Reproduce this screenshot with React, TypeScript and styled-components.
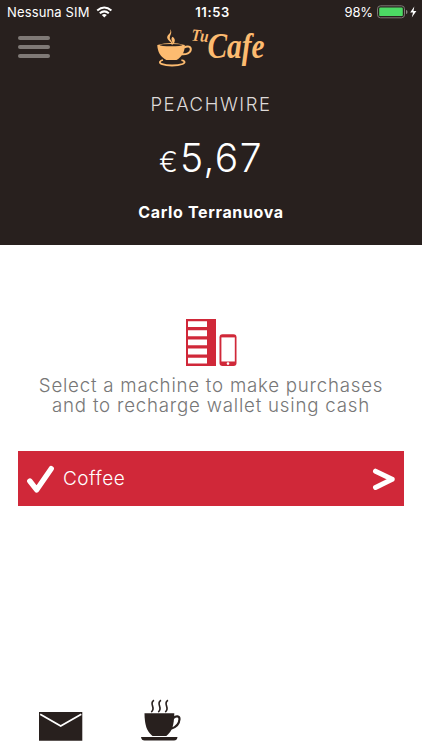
import React from "react";
import styled, { createGlobalStyle } from "styled-components";

const GlobalStyle = createGlobalStyle`
  * { box-sizing: border-box; }
  body { margin: 0; background: #fff; font-family: Inter, "Open Sans", sans-serif; }
  svg { display: block; flex: none; }
`;

const Screen = styled.div`
  width: 422px;
  height: 750px;
  display: flex;
  flex-direction: column;
  background: #fff;
  overflow: hidden;
`;

const Header = styled.header`
  height: 245px;
  flex: none;
  background: #28201e;
  color: #fff;
`;

const StatusBar = styled.div`
  height: 24px;
  display: grid;
  grid-template-columns: 1fr auto 1fr;
  align-items: center;
  padding: 0 4px 0 7px;
`;

const StatusGroup = styled.div<{ $end?: boolean }>`
  display: flex;
  align-items: center;
  justify-content: ${(p) => (p.$end ? "flex-end" : "flex-start")};
`;

const StatusText = styled.span<{ $bold?: boolean; $spacing: number }>`
  font-size: 13px;
  line-height: 24px;
  font-weight: ${(p) => (p.$bold ? 600 : 400)};
  letter-spacing: ${(p) => p.$spacing}px;
  white-space: nowrap;
`;

const WifiSlot = styled.div`
  margin-left: 6px;
`;

const NavBar = styled.div`
  height: 50px;
  display: grid;
  grid-template-columns: 133px 1fr;
  padding-left: 18px;
`;

const MenuButton = styled.button`
  display: flex;
  flex-direction: column;
  gap: 5px;
  width: 32px;
  height: 24px;
  margin: 12px 0 0;
  padding: 0;
  border: 0;
  background: none;
`;

const MenuLine = styled.span`
  height: 4px;
  border-radius: 2px;
  background: #7f7976;
`;

const Line = styled.div<{ $size: number; $height: number; $weight?: number; $spacing?: number }>`
  font-size: ${(p) => p.$size}px;
  line-height: ${(p) => p.$height}px;
  font-weight: ${(p) => p.$weight ?? 300};
  letter-spacing: ${(p) => p.$spacing ?? 0}px;
  text-align: center;
  white-space: nowrap;
`;

const Brand = styled(Line)`
  margin-top: 18px;
  color: #dedad8;
`;

const Balance = styled(Line)`
  margin-top: 22px;
`;

const Currency = styled.span`
  font-size: 28px;
  letter-spacing: 2px;
`;

const Owner = styled(Line)`
  margin-top: 20px;
`;

const Main = styled.main`
  flex: 1;
  display: flex;
  flex-direction: column;
  align-items: center;
  padding-top: 73px;
`;

const Prompt = styled.div`
  margin-top: 10px;
  color: #777;
`;

const MachineRow = styled.button`
  width: 386px;
  height: 55px;
  margin-top: 36px;
  padding: 0 8px;
  display: flex;
  align-items: center;
  border: 0;
  background: #d02839;
  color: #fff;
  font-family: inherit;
`;

const MachineName = styled(Line)`
  margin: 0 auto 0 9px;
`;

const Footer = styled.footer`
  height: 51px;
  display: flex;
  align-items: flex-start;
  padding-left: 39px;
  gap: 57px;
`;

const MailSlot = styled.div`
  padding-top: 13px;
`;

const WifiIcon = () => (
  <svg width="17" height="12" viewBox="0 0 17 12">
    <g fill="none" stroke="#fff" strokeWidth="2">
      <path d="M1.2 4.6Q8.3-1.6 15.4 4.6" />
      <path d="M3.8 7.3Q8.3 3.4 12.8 7.3" />
    </g>
    <path d="M5.8 9Q8.3 7 10.8 9L8.3 11.5Z" fill="#fff" />
  </svg>
);

const BatteryIcon = () => (
  <svg width="45" height="14" viewBox="-3 0 45 14">
    <rect x="1.5" y=".8" width="27" height="12" rx="3" fill="none" stroke="#7b7773" />
    <rect x="3.2" y="2.5" width="23.6" height="8.6" rx="1.2" fill="#4cd964" />
    <path d="M30 5Q31.5 5 31.5 7T30 9Z" fill="#8b8784" />
    <path d="M38.3 1.5 34.2 7.6H37L35.8 12.5 40.4 5.9H37.5Z" fill="#fff" />
  </svg>
);

const Logo = () => (
  <svg width="128" height="50" viewBox="151 24 128 50" fill="#fdbb70">
    <path d="M157.3 45Q171 40.8 184.8 45C185 52 181.2 57.4 176.5 60H166.3C160.5 57 157.5 51.8 157.3 45Z" />
    <ellipse cx="171" cy="45.1" rx="11.4" ry="1.2" fill="#28201e" />
    <path d="M184 47.6C188 45.2 191 46.8 190.8 49.5 190.6 53 186.2 54.6 181.6 54.2" fill="none" stroke="#fdbb70" strokeWidth="2" />
    <path d="M163 60C159 61 159 63 162.2 64.1 167 66 177 66 182.6 64 185.7 62.5 185 60.7 181.4 60.2" fill="none" stroke="#fdbb70" strokeWidth="1.8" />
    <path d="M170 29.2C172.3 34.1 165.7 34.3 167.5 38.8 168.5 41.3 172 42 171.7 45 174.2 41.6 169.1 40.2 169.8 36.9 170.4 34.7 172.7 32 170 29.2Z" />
    <path d="M172.5 36.8C175.7 38.7 175.6 42.5 172.2 45.2 173.6 41 169.7 39.7 172.5 36.8Z" />
    <text x="191" y="40.4" transform="rotate(5 191 41)" fontFamily="Liberation Serif, serif" fontSize="17" fontWeight="700" fontStyle="italic" textLength="17" lengthAdjust="spacingAndGlyphs">Tu</text>
    <text x="207.5" y="58.4" fontFamily="Liberation Serif, serif" fontSize="35" fontWeight="700" fontStyle="italic" textLength="57" lengthAdjust="spacingAndGlyphs">Cafe</text>
  </svg>
);

const MachineIcon = () => (
  <svg width="52" height="48" viewBox="185 318 52 48">
    <path d="M186 319H216V366H186Z" fill="#d02839" />
    <path d="M188 321.2H207V327H188ZM188 330.2H207V336.2H188ZM188 339.4H207V345.3H188ZM188 348.6H207V354.6H188ZM188 357.8H207V363.6H188Z" fill="#fff" />
    <rect x="219.5" y="334.3" width="17" height="31.7" rx="3" fill="#d02839" />
    <path d="M221.4 337.4H234.8V361.5H221.4Z" fill="#fff" />
    <circle cx="228" cy="363.6" r="1.3" fill="#fff" />
  </svg>
);

const CheckIcon = () => (
  <svg width="28" height="30" viewBox="26 463 28 30">
    <path d="M29.8 480 36.7 488.8 51.2 467.7" fill="none" stroke="#fff" strokeWidth="5.4" strokeLinecap="round" strokeLinejoin="round" />
  </svg>
);

const ChevronIcon = () => (
  <svg width="24" height="24" viewBox="372 466 24 24">
    <path d="M375.5 470.2 392.2 478.3 375.5 486.5" fill="none" stroke="#fff" strokeWidth="5" strokeLinecap="round" strokeLinejoin="round" />
  </svg>
);

const MailIcon = () => (
  <svg width="44" height="29" viewBox="39 712 44 29">
    <path d="M39 712H82.3V740.8H39Z" fill="#28201e" />
    <path d="M40.2 714.2 60.7 726 81.3 714.2" fill="none" stroke="#fff" strokeWidth="1.8" />
  </svg>
);

const CupIcon = () => (
  <svg width="42" height="43" viewBox="140 699 42 43">
    <path d="M144.5 713.2H174.3C174 725 172.5 731 166.3 736H152.5C146.5 731 144.7 725 144.5 713.2Z" fill="#28201e" />
    <path d="M173.5 718C176 715.6 179.7 715.8 179.5 719.2 179.2 723.8 175.5 727.3 171 728.7" fill="none" stroke="#28201e" strokeWidth="2.2" />
    <path d="M141 737H177.5Q177 740.6 174 740.6H144.5Q141.5 740.6 141 737Z" fill="#28201e" />
    <g fill="none" stroke="#28201e" strokeWidth="1.6">
      <path d="M154 700.2C148.2 703.4 156.8 708.2 151.2 712" />
      <path d="M161 700.2C155.2 703.4 163.8 708.2 158.2 712" />
      <path d="M168 700.2C162.2 703.4 170.8 708.2 165.2 712" />
    </g>
  </svg>
);

export default function App() {
  return (
    <>
      <GlobalStyle />
      <Screen>
        <Header>
          <StatusBar>
            <StatusGroup>
              <StatusText $spacing={0.15}>Nessuna SIM</StatusText>
              <WifiSlot><WifiIcon /></WifiSlot>
            </StatusGroup>
            <StatusText $bold $spacing={0.6}>11:53</StatusText>
            <StatusGroup $end>
              <StatusText $spacing={-0.1}>98%</StatusText>
              <BatteryIcon />
            </StatusGroup>
          </StatusBar>
          <NavBar>
            <MenuButton aria-label="Menu">
              <MenuLine /><MenuLine /><MenuLine />
            </MenuButton>
            <Logo />
          </NavBar>
          <Brand $size={18.5} $height={24} $spacing={1.55}>PEACHWIRE</Brand>
          <Balance $size={39} $height={40} $weight={350} $spacing={1.4}><Currency>€</Currency>5,67</Balance>
          <Owner $size={16} $height={20} $weight={700} $spacing={0.65}>Carlo Terranuova</Owner>
        </Header>
        <Main>
          <MachineIcon />
          <Prompt>
            <Line $size={18.7} $height={19.5} $spacing={0.76}>Select a machine to make purchases</Line>
            <Line $size={18.7} $height={19.5} $spacing={0.78}>and to recharge wallet using cash</Line>
          </Prompt>
          <MachineRow>
            <CheckIcon />
            <MachineName $size={19} $height={24} $spacing={0.5}>Coffee</MachineName>
            <ChevronIcon />
          </MachineRow>
        </Main>
        <Footer>
          <MailSlot><MailIcon /></MailSlot>
          <CupIcon />
        </Footer>
      </Screen>
    </>
  );
}
